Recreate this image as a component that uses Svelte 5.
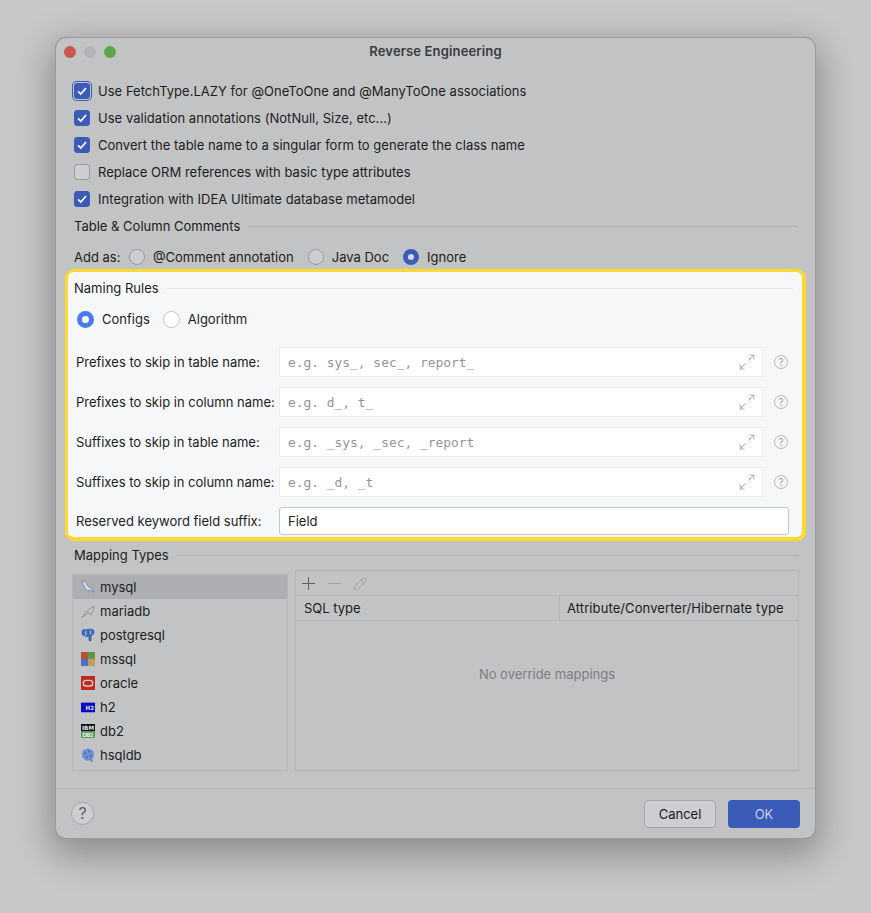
<script>
	const checks = [
		{ label: "Use FetchType.LAZY for @OneToOne and @ManyToOne associations", on: true, focus: true },
		{ label: "Use validation annotations (NotNull, Size, etc...)", on: true },
		{ label: "Convert the table name to a singular form to generate the class name", on: true },
		{ label: "Replace ORM references with basic type attributes", on: false },
		{ label: "Integration with IDEA Ultimate database metamodel", on: true },
	];
	const comments = [
		{ label: "@Comment annotation", on: false },
		{ label: "Java Doc", on: false },
		{ label: "Ignore", on: true },
	];
	const fields = [
		{ label: "Prefixes to skip in table name:", hint: "e.g. sys_, sec_, report_" },
		{ label: "Prefixes to skip in column name:", hint: "e.g. d_, t_" },
		{ label: "Suffixes to skip in table name:", hint: "e.g. _sys, _sec, _report" },
		{ label: "Suffixes to skip in column name:", hint: "e.g. _d, _t" },
	];
	const databases = ["mysql", "mariadb", "postgresql", "mssql", "oracle", "h2", "db2", "hsqldb"];
</script>

<main>
	<div class="dialog">
		<header class="titlebar">
			<div class="lights">
				<span class="light red"></span>
				<span class="light grey"></span>
				<span class="light green"></span>
			</div>
			<div class="title">Reverse Engineering</div>
		</header>

		<section class="checks">
			{#each checks as c}
				<div class="check-row">
					<span class="check" class:on={c.on} class:focus={c.focus}>
						{#if c.on}
							<svg width="12" height="12" viewBox="0 0 12 12"><path d="M2 6.300 4.800 9 10 3" fill="none" stroke="#fff" stroke-width="1.700" /></svg>
						{/if}
					</span>
					{c.label}
				</div>
			{/each}
		</section>

		<div class="group-title comments-title"><span>Table &amp; Column Comments</span><i></i></div>
		<div class="add-as">
			<span class="add-label">Add as:</span>
			{#each comments as r}
				<span class="radio-item">
					<span class="radio" class:on={r.on}></span>
					{r.label}
				</span>
			{/each}
		</div>

		<section class="naming">
			<div class="group-title"><span>Naming Rules</span><i></i></div>
			<div class="naming-radios">
				<span class="radio-item"><span class="radio on bright"></span>Configs</span>
				<span class="radio-item"><span class="radio light-radio"></span>Algorithm</span>
			</div>
			<div class="fields">
				{#each fields as f}
					<div class="field-row">
						<span class="field-label">{f.label}</span>
						<div class="field">
							<span class="hint">{f.hint}</span>
							<svg class="expand" width="16" height="16" viewBox="0 0 16 16">
								<path d="M9.500 6.500 15 1M10.500 1H15V5.500M6.500 9.500 1 15M1 10.500V15H5.500" fill="none" stroke="#a9abb0" stroke-width="1" />
							</svg>
						</div>
						<span class="help">?</span>
					</div>
				{/each}
				<div class="field-row keyword">
					<span class="field-label">Reserved keyword field suffix:</span>
					<div class="input">Field</div>
				</div>
			</div>
		</section>

		<div class="group-title mapping-title"><span>Mapping Types</span><i></i></div>
		<div class="mapping">
			<ul class="db-list">
				{#each databases as db, i}
					<li class:selected={i === 0}>
						<svg class="db-icon" width="16" height="16" viewBox="0 0 16 16">
							{#if db === "mysql"}
								<path d="M1 1c3 0 5 2 6 5 1 2 4 3 6 5l2 3-4-2H7C4 10 3 6 1 1Z" fill="#d5dbe8" stroke="#5e7fb5" stroke-width=".9" />
							{:else if db === "mariadb"}
								<path d="M1 15c3-1 3-5 6-7 3-3 5-3 8-6-1 3 0 7-3 8l-1 3-2-3c-2 0-4 3-8 5Z" fill="none" stroke="#85878b" stroke-width=".9" />
							{:else if db === "postgresql"}
								<path d="M.5 5C.5 2 3 .5 5.500 1.500 8 .5 13 .5 15 2.500c1 3-.5 5.500-3 6.500v5c-1 2-3.500 1-3.500-1V10C6.500 11 5 10 4 9 2 9 .5 7.500.5 5Z" fill="#3d69b8" />
								<path d="M5.500 3v6M11 3v4" stroke="#d5dbe8" stroke-width="1" />
							{:else if db === "mssql"}
								<rect width="8" height="8" fill="#b5522f" /><rect x="8" width="8" height="8" fill="#5b9a48" />
								<rect y="8" width="8" height="8" fill="#4a70c4" /><rect x="8" y="8" width="8" height="8" fill="#c99a5e" />
							{:else if db === "oracle"}
								<rect width="16" height="16" fill="#be2a1f" />
								<rect x="2.600" y="5" width="10.800" height="6.500" rx="3.200" fill="none" stroke="#d8c9c4" stroke-width="1.600" />
							{:else if db === "h2"}
								<rect y="3" width="16" height="11" fill="#0a0ac0" />
								<text x="5" y="11.500" class="tiny" textLength="10">H2</text>
							{:else if db === "db2"}
								<rect width="16" height="8" fill="#111" /><rect y="8" width="16" height="8" fill="#5a9a48" />
								<text x="1" y="6.800" class="tiny" textLength="14">IBM</text><text x="1.500" y="14.800" class="tiny" textLength="13">DB2</text>
							{:else}
								<circle cx="8" cy="7.500" r="7" fill="#6f8fd0" />
								<circle cx="5" cy="6" r="1" fill="#3d5ea8" /><circle cx="9" cy="4" r="1" fill="#3d5ea8" /><circle cx="11" cy="9" r="1" fill="#3d5ea8" /><circle cx="7" cy="10" r="1" fill="#3d5ea8" />
								<path d="M11 13l2 3" stroke="#3d5ea8" stroke-width="1.200" />
							{/if}
						</svg>
						{db}
					</li>
				{/each}
			</ul>
			<div class="table-panel">
				<div class="toolbar">
					<svg width="13" height="13" viewBox="0 0 13 13"><path d="M6.500 0v13M0 6.500h13" stroke="#5f6166" stroke-width="1" /></svg>
					<svg width="13" height="13" viewBox="0 0 13 13"><path d="M0 6.500h13" stroke="#9fa1a5" stroke-width="1" /></svg>
					<svg width="13" height="13" viewBox="0 0 13 13"><path d="M.5 9.500 8.500 1.500c1-1 2-1 3 0s1 2 0 3L3.500 12.500H.5ZM7 3l3 3" fill="none" stroke="#9fa1a5" stroke-width="1" /></svg>
				</div>
				<div class="thead">
					<span class="col-sql">SQL type</span>
					<span class="col-attr">Attribute/Converter/Hibernate type</span>
				</div>
				<div class="empty">No override mappings</div>
			</div>
		</div>

		<footer class="footer">
			<span class="round-help">?</span>
			<div class="buttons">
				<button class="cancel">Cancel</button>
				<button class="ok">OK</button>
			</div>
		</footer>
	</div>
</main>

<style>
	:global(body) {
		background: #c8c8c8;
	}

	main {
		display: flex;
		justify-content: center;
		min-height: 913px;
		padding-top: 38px;
		box-sizing: border-box;
		font-family: Inter, "Liberation Sans", sans-serif;
		font-size: 13px;
		color: #1c1d20;
	}

	.dialog {
		width: 759px;
		height: 800px;
		box-sizing: border-box;
		background: #c2c3c5;
		border-radius: 10px;
		box-shadow: 0 0 0 1px #9a9a9c, 0 12px 36px 6px rgba(0, 0, 0, 0.3);
		display: flex;
		flex-direction: column;
	}

	.titlebar {
		display: flex;
		align-items: center;
		justify-content: center;
		height: 28px;
		padding-bottom: 2px;
		box-sizing: border-box;
		position: relative;
		flex: none;
	}

	.lights {
		position: absolute;
		left: 8px;
		top: 8px;
		display: flex;
		gap: 8px;
	}

	.light {
		width: 12px;
		height: 12px;
		border-radius: 50%;
	}

	.red { background: #c9584d; }
	.grey { background: #b3b4b8; }
	.green { background: #5ea548; }

	.title {
		font-weight: 600;
		color: #3a3b3f;
		font-size: 13px;
		letter-spacing: 0.15px;
	}

	.checks {
		display: flex;
		flex-direction: column;
		gap: 9px;
		margin: 16px 0 0 18px;
		letter-spacing: 0.03px;
	}

	.check-row {
		display: flex;
		align-items: center;
		gap: 8px;
		height: 18px;
	}

	.check {
		width: 16px;
		height: 16px;
		box-sizing: border-box;
		border-radius: 3px;
		border: 1px solid #97999d;
		background: #cdced1;
		display: flex;
		align-items: center;
		justify-content: center;
		flex: none;
	}

	.check.on {
		background: #3a5cb8;
		border-color: #3a5cb8;
	}

	.check.focus {
		box-shadow: 0 0 0 1px #c2c3c5, 0 0 0 2px #3a5cb8;
	}

	.group-title {
		display: flex;
		align-items: center;
		gap: 7px;
		height: 16px;
		color: #1c1d20;
	}

	.group-title i {
		flex: 1;
		height: 1px;
		background: #b2b3b6;
	}

	.comments-title {
		margin: 10px 17px 0 18px;
	}

	.add-as {
		display: flex;
		align-items: center;
		height: 20px;
		margin: 13px 0 0 18px;
	}

	.add-label {
		width: 55px;
		flex: none;
	}

	.add-as .radio-item {
		margin-right: 14px;
	}

	.radio-item {
		display: flex;
		align-items: center;
		gap: 8px;
	}

	.radio {
		width: 16px;
		height: 16px;
		box-sizing: border-box;
		border-radius: 50%;
		border: 1px solid #97999d;
		background: #cdced1;
		flex: none;
	}

	.radio.on {
		border: 5px solid #3a5cb8;
		background: #d8d9dc;
	}

	.radio.on.bright {
		border-color: #4a7aeb;
		background: #fff;
		width: 17px;
		height: 17px;
	}

	.radio.light-radio {
		width: 17px;
		height: 17px;
		border-color: #c4c6ca;
		background: #fff;
	}

	.naming {
		margin: 2px 9px 0 9px;
		height: 272px;
		box-sizing: border-box;
		border-style: solid;
		border-color: #ffd92e;
		border-width: 3px 4px 4px 3px;
		border-radius: 9px;
		background: #f6f7f9;
		padding: 8px 6px 0 6px;
		flex: none;
	}

	.naming .group-title {
		margin-right: 3px;
		color: #1c1d20;
	}

	.naming .group-title i {
		background: #e9eaed;
	}

	.naming-radios {
		display: flex;
		gap: 13px;
		margin: 13px 0 0 3px;
		height: 20px;
		align-items: center;
	}

	.fields {
		display: flex;
		flex-direction: column;
		gap: 10px;
		margin: 18px 0 0 2px;
	}

	.field-row {
		display: flex;
		align-items: center;
		height: 30px;
	}

	.field-label {
		width: 203px;
		flex: none;
		white-space: nowrap;
	}

	.field {
		width: 484px;
		height: 30px;
		box-sizing: border-box;
		background: #fff;
		border: 1px solid #ecedef;
		display: flex;
		align-items: center;
		justify-content: space-between;
		padding: 0 7px 0 8px;
		flex: none;
	}

	.hint {
		font-family: "DejaVu Sans Mono", "Liberation Mono", monospace;
		font-size: 12.900px;
		color: #92949a;
	}

	.help {
		width: 14px;
		height: 14px;
		box-sizing: border-box;
		margin-left: 11px;
		border: 1px solid #b4b6ba;
		border-radius: 50%;
		color: #9c9ea3;
		font-size: 10px;
		line-height: 12px;
		text-align: center;
		flex: none;
	}

	.keyword {
		height: 28px;
		margin-top: 0;
	}

	.input {
		width: 510px;
		height: 28px;
		box-sizing: border-box;
		background: #fff;
		border: 1px solid #c4c6ca;
		border-radius: 3px;
		padding: 0 8px;
		display: flex;
		align-items: center;
		flex: none;
	}

	.mapping-title {
		margin: 6px 16px 0 18px;
	}

	.mapping {
		display: flex;
		align-items: flex-end;
		gap: 7px;
		margin: 7px 16px 0 16px;
		height: 201px;
	}

	.db-list {
		list-style: none;
		margin: 0;
		padding: 0;
		width: 216px;
		height: 197px;
		box-sizing: border-box;
		border: 1px solid #b4b5b8;
		flex: none;
	}

	.db-list li {
		display: flex;
		align-items: center;
		gap: 5px;
		height: 24px;
		padding-left: 8px;
	}

	.db-list li.selected {
		background: #adaeb1;
	}

	.db-icon {
		flex: none;
		width: 14px;
		height: 14px;
	}

	.tiny {
		font-family: "DejaVu Sans", sans-serif;
		font-size: 6.500px;
		font-weight: 700;
		fill: #dfe3f5;
	}

	.table-panel {
		flex: 1;
		height: 201px;
		box-sizing: border-box;
		border: 1px solid #b4b5b8;
		display: flex;
		flex-direction: column;
	}

	.toolbar {
		height: 25px;
		box-sizing: border-box;
		display: flex;
		align-items: center;
		gap: 13px;
		padding-left: 6px;
		border-bottom: 1px solid #b4b5b8;
		flex: none;
	}

	.thead {
		height: 25px;
		box-sizing: border-box;
		display: flex;
		align-items: center;
		border-bottom: 1px solid #b4b5b8;
		flex: none;
	}

	.col-sql {
		width: 264px;
		padding-left: 8px;
		box-sizing: border-box;
		border-right: 1px solid #b4b5b8;
		height: 100%;
		display: flex;
		align-items: center;
	}

	.col-attr {
		padding-left: 7px;
		letter-spacing: 0.09px;
	}

	.empty {
		flex: 1;
		display: flex;
		align-items: center;
		justify-content: center;
		color: #7c7e83;
		padding-bottom: 44px;
	}

	.footer {
		margin-top: 17px;
		border-top: 1px solid #b4b5b8;
		flex: 1;
		display: flex;
		align-items: center;
		justify-content: space-between;
		padding: 0 15px 0 15px;
	}

	.round-help {
		width: 23px;
		height: 23px;
		box-sizing: border-box;
		border: 1px solid #a5a6aa;
		border-radius: 50%;
		background: #cdced1;
		color: #5f6166;
		font-size: 16px;
		line-height: 21px;
		text-align: center;
	}

	.buttons {
		display: flex;
		gap: 12px;
	}

	button {
		width: 72px;
		height: 28px;
		border-radius: 4px;
		font: inherit;
		padding: 0;
	}

	.cancel {
		background: #cdced1;
		border: 1px solid #a5a6aa;
		color: #1c1d20;
	}

	.ok {
		background: #3a5cb8;
		border: none;
		color: #c8cfe2;
	}
</style>
